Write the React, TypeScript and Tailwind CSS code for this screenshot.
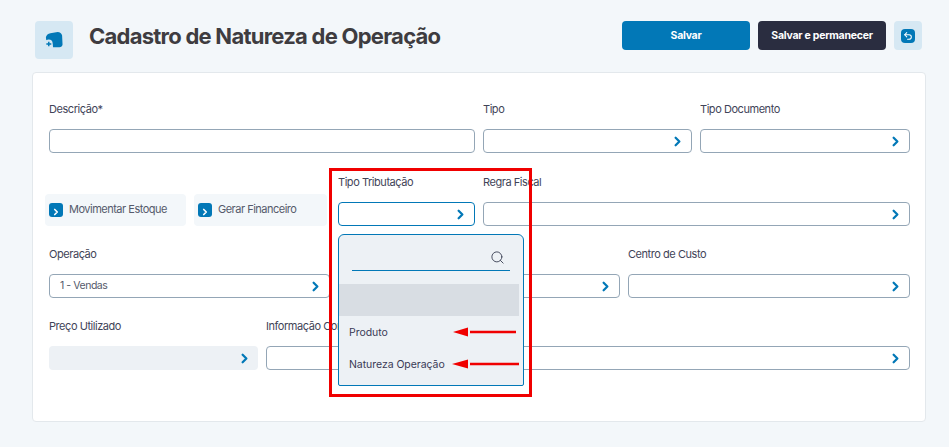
import { ChevronRight, Search, Undo2 } from "lucide-react";

const font = "font-['Inter',sans-serif]";

function Chevron() {
  return <ChevronRight className="-mr-px size-[15px] shrink-0 text-[#0278b7]" strokeWidth={3.6} />;
}

function Field({
  label,
  value,
  arrow = true,
  disabled = false,
  focused = false,
  labelClassName = "",
  className,
}: {
  label: string;
  value?: string;
  arrow?: boolean;
  disabled?: boolean;
  focused?: boolean;
  labelClassName?: string;
  className: string;
}) {
  const box = disabled
    ? "flex h-6 items-center justify-end rounded-[4px] bg-[#edf1f5] pr-[7px]"
    : focused
      ? "flex h-6 items-center justify-between rounded-[4px] border border-[#0278b7] bg-white pl-[10px] pr-[7px]"
      : "flex h-6 items-center justify-between rounded-[4px] border border-[#94a6b6] bg-white pl-[10px] pr-[7px]";
  return (
    <div className={className}>
      <div className={`mb-[11px] h-[18px] overflow-hidden whitespace-nowrap text-[11px] leading-[18px] tracking-[-0.45px] text-[#3f4458] ${labelClassName}`}>{label}</div>
      <div className={box}>
        <span className="text-[10.5px] tracking-[-0.45px] text-[#555a6b]">{value}</span>
        {arrow && <Chevron />}
      </div>
    </div>
  );
}

function Toggle({ label, className }: { label: string; className: string }) {
  return (
    <div className={`flex h-8 items-start rounded-[4px] bg-[#f3f7fa] pl-1 pt-[9px] ${className}`}>
      <span className="flex size-[14px] items-end justify-center rounded-[3px] bg-[#0278b7]">
        <ChevronRight className="size-[10px] text-white" strokeWidth={4} />
      </span>
      <span className="ml-[6px] text-[11px] leading-[13px] tracking-[-0.5px] text-[#555a6b]">{label}</span>
    </div>
  );
}

export default function App() {
  return (
    <div className={`relative h-[447px] w-[949px] overflow-hidden bg-[#f3f7fa] ${font}`}>
      <div className="flex h-[72px] items-start pl-[35px] pr-[27px] pt-[21px]">
        <div className="flex size-[38px] items-center justify-center rounded-[4px] bg-[#d6e8f3]">
          <svg width="18" height="18" viewBox="0 0 20 20">
            <path d="M1 7 Q2 3 6 2.5 L14 1 Q18 1 19 5 L19.5 15 Q19 18 16 18 L9 18 Q9 11 1.5 11 Z" fill="#0278b7" />
            <circle cx="4" cy="14" r="4.5" fill="#d6e8f3" />
            <path d="M1.5 14.5 H7 M4.2 12 V17" stroke="#0278b7" strokeWidth="1.6" />
          </svg>
        </div>
        <h1 className="ml-4 mt-[1px] text-[22px] font-bold leading-[28px] tracking-[-0.75px] text-[#3e3c40]">
          Cadastro de Natureza de Operação
        </h1>
        <div className="ml-auto flex items-start">
          <button className="h-[29px] w-32 rounded-[4px] bg-[#0278b7] text-[10.5px] font-bold tracking-[-0.25px] text-white">Salvar</button>
          <button className="ml-2 h-[29px] w-32 rounded-[4px] bg-[#2a2d40] text-[10.5px] font-bold tracking-[-0.25px] text-white">Salvar e permanecer</button>
          <div className="ml-2 flex h-[29px] w-7 items-center justify-center rounded-[4px] bg-[#d6e8f3]">
            <span className="flex size-[14px] items-center justify-center rounded-[4px] bg-[#0278b7]">
              <Undo2 className="size-[10px] text-white" strokeWidth={2.5} />
            </span>
          </div>
        </div>
      </div>

      <div className="mx-[32px] h-[350px] w-[894px] rounded-[4px] border border-[#e3e8ec] bg-white pl-4 pr-[15px] pt-[27px]">
        <div className="flex gap-2">
          <Field label="Descrição*" arrow={false} className="w-[426px]" />
          <Field label="Tipo" className="w-[209px]" />
          <Field label="Tipo Documento" className="w-[210px]" />
        </div>
        <div className="mt-5 flex">
          <div className="flex items-start pt-[21px]">
            <Toggle label="Movimentar Estoque" className="-ml-1 w-[141px]" />
            <Toggle label="Gerar Financeiro" className="ml-2 w-[133px]" />
          </div>
          <Field label="Tipo Tributação" focused className="ml-[11px] w-[137px]" />
          <Field label="Regra Fiscal" className="ml-2 w-[427px]" />
        </div>
        <div className="mt-[19px] flex gap-2">
          <Field label="Operação" value="1 - Vendas" className="w-[281px]" />
          <Field label="" className="w-[282px]" />
          <Field label="Centro de Custo" className="w-[282px]" />
        </div>
        <div className="mt-[19px] flex gap-2">
          <Field label="Preço Utilizado" disabled className="w-[209px]" />
          <Field label="Informação Complementar" labelClassName="w-[72px]" className="w-[644px]" />
        </div>
      </div>

      <div className="absolute left-[338px] top-[234px] h-[152px] w-[186px] rounded-t-[6px] rounded-b-[2px] border border-[#0278b7] bg-[#edf1f5]">
        <div className="mx-[13px] mt-[9px] flex h-[27px] items-center justify-end border-b border-[#0278b7] pr-[5px]">
          <Search className="size-[15px] text-[#3f4458]" strokeWidth={1.5} />
        </div>
        <div className="mt-[13px] h-8 w-[180px] bg-[#d8dde3]" />
        <div className="flex h-8 items-center pl-[10px] pt-[2px] text-[10.5px] tracking-[-0.05px] text-[#3a3a55]">Produto</div>
        <div className="flex h-8 items-center pl-[10px] pt-[2px] text-[10.5px] tracking-[-0.05px] text-[#3a3a55]">Natureza Operação</div>
      </div>

      <div className="absolute left-[329px] top-[168px] h-[229px] w-[203px] border-[3px] border-[#f00000]" />
      <svg className="absolute left-[450px] top-[324px]" width="72" height="48" viewBox="0 0 72 48">
        <path d="M20 8 H66" stroke="#f00000" strokeWidth="2.5" />
        <path d="M3 8 L18 3.5 V12.5 Z" fill="#f00000" />
        <path d="M20 40 H69" stroke="#f00000" strokeWidth="2.5" />
        <path d="M2 40 L18 35.5 V44.5 Z" fill="#f00000" />
      </svg>
    </div>
  );
}
